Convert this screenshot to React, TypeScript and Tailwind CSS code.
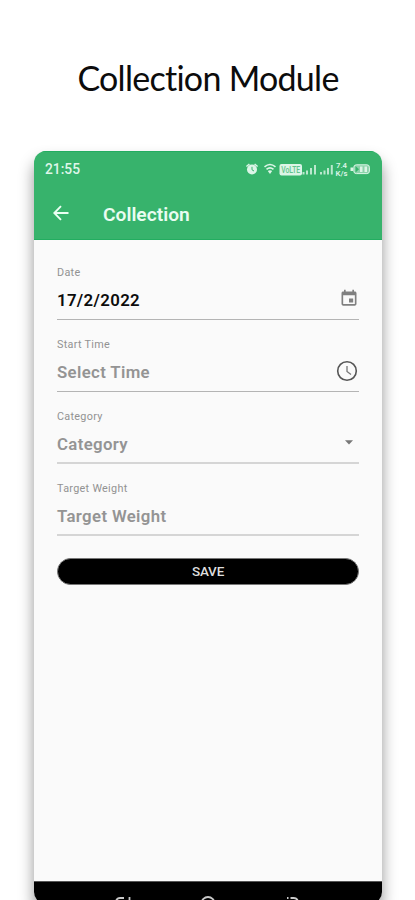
import React from "react";

interface FieldProps {
  label: string;
  value: string;
  filled?: boolean;
  icon?: React.ReactNode;
  thick?: boolean;
}

function Field({ label, value, filled = false, icon, thick = false }: FieldProps) {
  return (
    <div
      className={`flex h-[72px] flex-col justify-end ${
        thick ? "border-b-2 border-[#d5d5d5]" : "border-b border-[#b4b4b4]"
      }`}
    >
      <span className="block h-[14px] text-[10.8px] leading-[14px] tracking-[0.3px] text-[#929292]">
        {label}
      </span>
      <div className={`mt-[8px] flex items-start justify-between ${thick ? "h-[30px]" : "h-[31px]"}`}>
        <span
          className={`text-[16.8px] font-semibold leading-[24px] tracking-[0.35px] ${
            filled ? "text-[#0c0c0c]" : "text-[#949494]"
          }`}
        >
          {value}
        </span>
        {icon}
      </div>
    </div>
  );
}

function CalendarIcon() {
  return (
    <svg viewBox="0 0 24 24" className="mt-px h-[19px] w-[20px] fill-[#808080]" preserveAspectRatio="none">
      <path d="M17 12h-5v5h5v-5zM16 1v2H8V1H6v2H5c-1.11 0-1.99.9-1.99 2L3 19c0 1.1.89 2 2 2h14c1.1 0 2-.9 2-2V5c0-1.1-.9-2-2-2h-1V1h-2zm3 18H5V8h14v11z" />
    </svg>
  );
}

function ClockIcon() {
  return (
    <svg viewBox="0 0 22 22" className="mr-px size-[22px] fill-none stroke-[#555]" strokeWidth="1.6">
      <circle cx="11" cy="11" r="9.3" />
      <path d="M11 6v5.5l4 3" stroke="#777" strokeWidth="1.3" />
    </svg>
  );
}

function CaretIcon() {
  return (
    <svg viewBox="0 0 8 5" className="mr-[6px] mt-[8px] h-[5px] w-[8px] fill-[#777]">
      <path d="M0 .3h8L4 4.6z" />
    </svg>
  );
}

function StatusIcons() {
  return (
    <svg viewBox="0 0 126 18" className="h-[18px] w-[126px] fill-[#dcf5e7]">
      {/* alarm */}
      <circle cx="7" cy="9.5" r="5" />
      <path d="M1.4 6.5l3-2.5M9.6 4l3 2.5" stroke="#dcf5e7" strokeWidth="1.5" />
      <path d="M7 6.8v3l2 1.2" fill="none" stroke="#37b36c" strokeWidth="1" />
      {/* wifi */}
      <g fill="none" stroke="#dcf5e7" strokeWidth="1.6">
        <path d="M19.5 6.8q5.5-4.6 11 0" />
        <path d="M21.5 9.3q3.5-3 7 0" />
      </g>
      <path d="M22.8 11q2.2-1.6 4.4 0L25 14z" />
      {/* volte */}
      <rect x="34.5" y="4" width="22.5" height="11.5" rx="2" />
      <text
        x="45.7"
        y="12.9"
        textAnchor="middle"
        fontSize="8.5"
        fontWeight="500"
        textLength="19"
        lengthAdjust="spacingAndGlyphs"
        fill="#62c48c"
        className="font-[Roboto,sans-serif]"
      >
        VoLTE
      </text>
      {/* signal */}
      <path d="M57.5 12h2v2.5h-2zM61 10.5h2v4h-2zM65 8h2v6.5h-2zM69 5h2v9.5h-2z" opacity="0.8" />
      <path d="M75 12h2v2.5h-2zM78.5 10.5h2v4h-2zM82 8h2v6.5h-2zM85.8 5h2v9.5h-2z" opacity="0.8" />
      <g fontSize="7.8" fontWeight="600" textAnchor="middle" className="font-[Roboto,sans-serif]">
        <text x="96.5" y="8.2">7.4</text>
        <text x="96.5" y="15.6">K/s</text>
      </g>
      {/* battery */}
      <rect x="105.5" y="7.5" width="2.5" height="3.5" />
      <rect x="108.8" y="4.8" width="15.6" height="8.8" rx="2.5" fill="#8bd3aa" stroke="#dcf5e7" strokeWidth="1" />
      <path d="M110.5 6v6.5l3.5-3.2z" fill="#37b36c" />
      <path d="M115 6.5h2.5V12H115zM119.500 6.500h2.500V12h-2.500z" />
    </svg>
  );
}

export default function App() {
  return (
    <div className="flex h-[900px] w-[415px] flex-col overflow-hidden bg-white font-[Roboto,sans-serif]">
      <h1 className="flex h-[151px] shrink-0 items-start justify-center whitespace-nowrap pt-[56px] pl-px font-[Lato,sans-serif] text-[34px] leading-[44px] tracking-[-0.72px] text-[#0c0c0c]">
        Collection Module
      </h1>

      <div className="ml-[34px] flex h-[753px] w-[348px] shrink-0 flex-col overflow-hidden rounded-[12px] bg-[#fafafa] shadow-[0_10px_15px_rgba(0,0,0,0.42)]">
        <header className="h-[89px] shrink-0 border-y border-[#22ad60] bg-[#37b36c]">
          <div className="flex h-[34px] items-center justify-between px-[11px]">
            <span className="text-[13.8px] font-medium text-[#dff6e9]">21:55</span>
            <StatusIcons />
          </div>
          <div className="flex h-[54px] items-center pl-[19px]">
            <svg viewBox="0 0 16 16" className="size-[16px] fill-none stroke-[#eafff2]" strokeWidth="1.9">
              <path d="M15.5 8h-14M8 1.2L1.3 8L8 14.8" />
            </svg>
            <span className="ml-[34px] mt-[3px] text-[19.2px] font-semibold leading-[24px] text-[#e9fcf1]">
              Collection
            </span>
          </div>
        </header>

        <main className="flex h-[641px] shrink-0 flex-col px-[23px] pt-[8px]">
          <Field label="Date" value="17/2/2022" filled icon={<CalendarIcon />} />
          <Field label="Start Time" value="Select Time" icon={<ClockIcon />} />
          <Field label="Category" value="Category" icon={<CaretIcon />} thick />
          <Field label="Target Weight" value="Target Weight" thick />
          <button className="mt-[22px] h-[27px] w-full rounded-full border border-[#777] bg-black text-[13.5px] font-medium leading-[25px] tracking-[-0.2px] text-[#dedede]">
            SAVE
          </button>
        </main>

        <footer className="flex h-[23px] shrink-0 items-start border-t border-[#555] bg-black">
          <svg viewBox="0 0 348 22" className="h-[22px] w-full fill-none stroke-[#c8c8c8]" strokeWidth="1.8">
            <path d="M82 19q1-3 4-3h4M95.5 15v6" />
            <circle cx="174" cy="21.5" r="6.5" />
            <path d="M253 16h1.5M256.5 16h3q4.5 0 4.5 5M254.5 18v3" />
          </svg>
        </footer>
      </div>
    </div>
  );
}
